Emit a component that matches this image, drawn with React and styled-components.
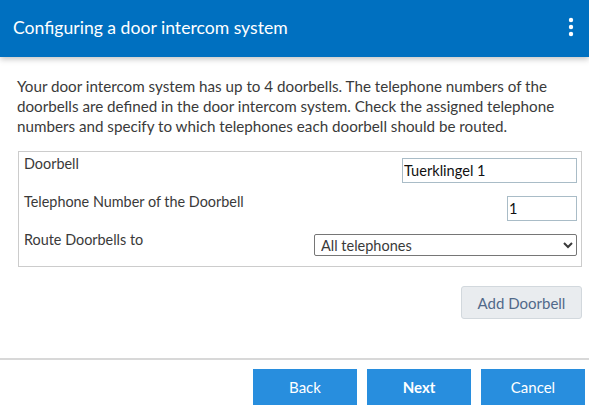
import React from "react";
import styled, { createGlobalStyle } from "styled-components";

const GlobalStyle = createGlobalStyle`
  html, body {
    margin: 0;
    padding: 0;
    background: #fff;
    font-family: Lato, "Liberation Sans", sans-serif;
  }
`;

const Page = styled.div`
  width: 589px;
  height: 411px;
  display: flex;
  flex-direction: column;
  overflow: hidden;
`;

const Header = styled.header`
  height: 57px;
  flex-shrink: 0;
  background-color: #0070c0;
  box-shadow: 0 2px 6px rgb(0 0 0 / 25%);
  display: flex;
  align-items: center;
  justify-content: space-between;
  padding: 0 14px 0 13px;
  position: relative;
  z-index: 1;
`;

const Title = styled.h1`
  margin: 0;
  font-size: 17.6px;
  font-weight: normal;
  color: #fff;
  margin-top: -3px;
`;

const MenuButton = styled.div`
  width: 8px;
  height: 20px;
  display: flex;
  align-items: center;
  justify-content: center;
  margin-top: -4px;
`;

const Content = styled.main`
  padding: 19px 7px 0 17px;
  height: 301px;
  box-sizing: border-box;
  display: flex;
  flex-direction: column;
`;

const Intro = styled.p`
  margin: 0;
  font-size: 15.2px;
  line-height: 20px;
  color: #3a3a3a;
`;

const FieldBox = styled.div`
  margin: 15px 0 0 1px;
  border: 1px solid #ccc;
  padding: 0 4px 0 5px;
`;

const FieldRow = styled.div`
  height: 38px;
  box-sizing: border-box;
  padding-top: 2px;
  display: flex;
  justify-content: space-between;
  align-items: flex-start;
`;

const Label = styled.label`
  font-size: 14.4px;
  line-height: 20px;
  color: #3a3a3a;
`;

const TextInput = styled.input`
  margin-top: 4px;
  width: ${(p) => p.$width}px;
  height: 25px;
  box-sizing: border-box;
  border: 1px solid #a9bcc7;
  padding: 0 1px;
  font-family: Lato, "Liberation Sans", sans-serif;
  font-size: 14.6px;
  color: #111;
  outline: none;
`;

const Select = styled.select`
  margin-top: 4px;
  width: 263px;
  height: 22px;
  box-sizing: border-box;
  border: 1px solid #767676;
  border-radius: 2px;
  padding: 0 0 0 2px;
  font-family: Lato, "Liberation Sans", sans-serif;
  font-size: 14.5px;
  color: #3a3a3a;
  background: #fff;
`;

const Actions = styled.div`
  display: flex;
  justify-content: flex-end;
  margin-top: 19px;
`;

const SecondaryButton = styled.button`
  width: 121px;
  height: 33px;
  border: 1px solid #d2d8dd;
  border-radius: 3px;
  background-color: #e9ecef;
  color: #51698a;
  font-family: Lato, "Liberation Sans", sans-serif;
  font-size: 15px;
`;

const Footer = styled.footer`
  border-top: 2px solid #d8d8d8;
  display: flex;
  justify-content: flex-end;
  gap: 10px;
  padding: 9px 4px 0 0;
`;

const PrimaryButton = styled.button`
  width: 104px;
  height: 36px;
  border: none;
  background-color: #288ede;
  color: #fff;
  font-family: Lato, "Liberation Sans", sans-serif;
  font-size: 15px;
  font-weight: ${(p) => (p.$strong ? "bold" : "normal")};
`;

const KebabIcon = () => (
  <svg width="8" height="20" viewBox="0 0 8 20">
    <circle cx="4" cy="3" r="2.2" fill="#fff" />
    <circle cx="4" cy="10" r="2.2" fill="#fff" />
    <circle cx="4" cy="17" r="2.2" fill="#fff" />
  </svg>
);

export default function App() {
  return (
    <Page>
      <GlobalStyle />
      <Header>
        <Title>Configuring a door intercom system</Title>
        <MenuButton>
          <KebabIcon />
        </MenuButton>
      </Header>
      <Content>
        <Intro>
          Your door intercom system has up to 4 doorbells. The telephone numbers of the
          doorbells are defined in the door intercom system. Check the assigned telephone
          numbers and specify to which telephones each doorbell should be routed.
        </Intro>
        <FieldBox>
          <FieldRow>
            <Label>Doorbell</Label>
            <TextInput $width={175} defaultValue="Tuerklingel 1" />
          </FieldRow>
          <FieldRow>
            <Label>Telephone Number of the Doorbell</Label>
            <TextInput $width={70} defaultValue="1" />
          </FieldRow>
          <FieldRow>
            <Label>Route Doorbells to</Label>
            <Select defaultValue="all">
              <option value="all">All telephones</option>
            </Select>
          </FieldRow>
        </FieldBox>
        <Actions>
          <SecondaryButton>Add Doorbell</SecondaryButton>
        </Actions>
      </Content>
      <Footer>
        <PrimaryButton>Back</PrimaryButton>
        <PrimaryButton $strong>Next</PrimaryButton>
        <PrimaryButton>Cancel</PrimaryButton>
      </Footer>
    </Page>
  );
}
